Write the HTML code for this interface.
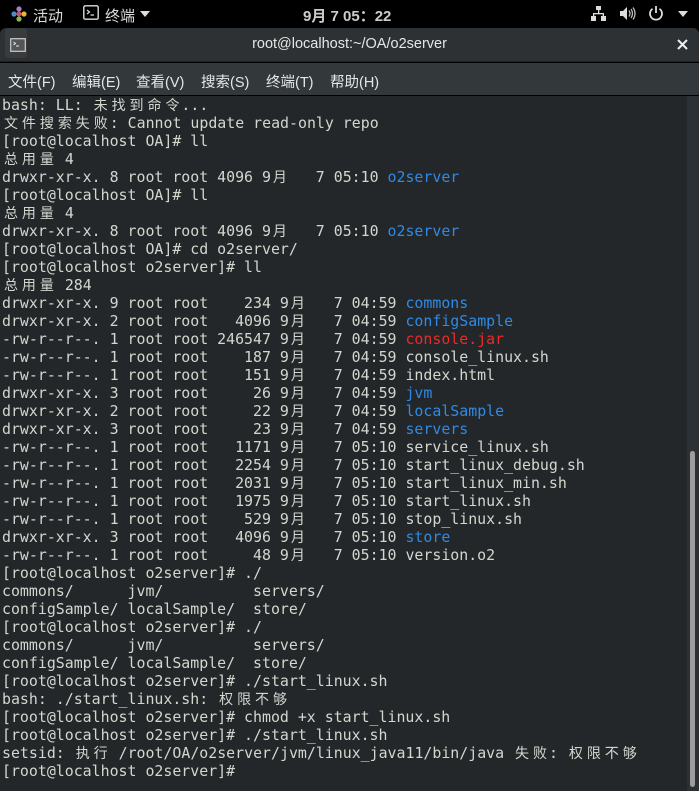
<!DOCTYPE html>
<html><head><meta charset="utf-8"><style>
*{margin:0;padding:0;box-sizing:border-box}
body{width:699px;height:791px;overflow:hidden;background:#000;font-family:"Liberation Sans","Noto Sans CJK SC",sans-serif;position:relative}
#top{position:absolute;left:0;top:0;width:699px;height:28px;background:#000;color:#dcdcdc;font-size:15px}
#top span{position:absolute;top:5px}
#title{position:absolute;left:0;top:28px;width:699px;height:34px;background:#2d3133;border-radius:6px 6px 0 0;border-bottom:1px solid #1d1f20;color:#e6e6e6;font-size:14.5px}
#menu{position:absolute;left:0;top:63px;width:699px;height:32px;background:#33393b;color:#e6e6e6;font-size:14.5px}
#menu span{position:absolute;top:8px}
#term{position:absolute;left:0;top:96px;width:687px;height:695px;background:#232729;color:#d3d7cf;font-family:"DejaVu Sans Mono","Liberation Mono","Noto Sans CJK SC",monospace;font-size:14.9px;padding-left:2px}
#term div{height:18px;line-height:18px;white-space:pre}
i{display:inline-block;width:17.96px;font-style:normal;text-align:center;font-family:"Noto Sans CJK SC",sans-serif;font-size:14px;line-height:18px;vertical-align:top}
.b{color:#2f8ae6}.r{color:#ef2929}
#sb{position:absolute;left:687px;top:96px;width:12px;height:695px;background:#2d3133}
#th{position:absolute;left:690px;top:451px;width:5px;height:336px;background:#9b9e9c;border-radius:3px}
</style></head><body>
<div id="top">
<svg style="position:absolute;left:11px;top:6px" width="16" height="16" viewBox="0 0 16 16"><circle cx="8" cy="3" r="2.6" fill="#a97fc0"/><circle cx="13" cy="8" r="2.6" fill="#e3b43a"/><circle cx="8" cy="13" r="2.6" fill="#8cb84a"/><circle cx="3" cy="8" r="2.6" fill="#4f8ec9"/><circle cx="8" cy="8" r="2.5" fill="#c94f6a"/></svg>
<span style="left:33px">活动</span>
<svg style="position:absolute;left:83px;top:5px" width="16" height="15" viewBox="0 0 16 15"><rect x="0.8" y="0.8" width="14.4" height="13.4" rx="1.5" fill="none" stroke="#ddd" stroke-width="1.4"/><path d="M4 5l2.5 2L4 9M7.5 10h3.5" stroke="#ddd" stroke-width="1.2" fill="none"/></svg>
<span style="left:105px">终端</span>
<svg style="position:absolute;left:140px;top:11px" width="10" height="6"><path d="M0 0h10L5 6z" fill="#ddd"/></svg>
<span style="left:303px;font-weight:bold;color:#ccc">9月 7 05：22</span>
<svg style="position:absolute;left:591px;top:6px" width="15" height="15" viewBox="0 0 15 15" fill="#ddd"><rect x="5" y="0" width="5" height="4"/><rect x="7" y="4" width="1.3" height="3"/><rect x="2" y="7" width="11" height="1.3"/><rect x="2" y="7" width="1.3" height="3"/><rect x="11.7" y="7" width="1.3" height="3"/><rect x="0" y="10" width="5" height="5"/><rect x="10" y="10" width="5" height="5"/></svg>
<svg style="position:absolute;left:620px;top:6px" width="16" height="15" viewBox="0 0 16 15"><path d="M0 5h3l4-4v13l-4-4H0z" fill="#ddd"/><path d="M9 4.5q2 3 0 6M11 3q3 4.5 0 9M13 1.5q4 6 0 12" stroke="#bbb" stroke-width="1.3" fill="none"/></svg>
<svg style="position:absolute;left:648px;top:5px" width="16" height="16" viewBox="0 0 16 16"><path d="M4.5 3.8a6 6 0 1 0 7 0" stroke="#ddd" stroke-width="1.8" fill="none"/><path d="M8 1v7" stroke="#ddd" stroke-width="1.8"/></svg>
<svg style="position:absolute;left:678px;top:11px" width="10" height="6"><path d="M0 0h10L5 6z" fill="#ddd"/></svg>
</div>
<div id="title">
<div style="position:absolute;left:5px;top:0;width:22px;height:30px;background:#383c3e;border-radius:3px"></div>
<svg style="position:absolute;left:10px;top:10px" width="16" height="14" viewBox="0 0 16 14"><rect x="0.7" y="0.7" width="14.6" height="12.6" fill="#555" stroke="#ccc" stroke-width="1.2"/><path d="M3.5 4l2 1.5-2 1.5M6 8h3" stroke="#eee" stroke-width="1" fill="none"/></svg>
<div style="position:absolute;left:0;width:699px;top:8px;text-align:center">root@localhost:~/OA/o2server</div>
<svg style="position:absolute;left:677px;top:11px" width="11" height="11"><path d="M1 1l9 9M10 1l-9 9" stroke="#eee" stroke-width="2"/></svg>
</div>
<div id="menu">
<span style="left:8px">文件(F)</span><span style="left:72px">编辑(E)</span><span style="left:136px">查看(V)</span><span style="left:201px">搜索(S)</span><span style="left:266px">终端(T)</span><span style="left:330px">帮助(H)</span>
</div>
<div id="term">
<div>bash: LL: <i>未</i><i>找</i><i>到</i><i>命</i><i>令</i>...</div>
<div><i>文</i><i>件</i><i>搜</i><i>索</i><i>失</i><i>败</i>: Cannot update read-only repo</div>
<div>[root@localhost OA]# ll</div>
<div><i>总</i><i>用</i><i>量</i> 4</div>
<div>drwxr-xr-x. 8 root root 4096 9<i>月</i>   7 05:10 <span class="b">o2server</span></div>
<div>[root@localhost OA]# ll</div>
<div><i>总</i><i>用</i><i>量</i> 4</div>
<div>drwxr-xr-x. 8 root root 4096 9<i>月</i>   7 05:10 <span class="b">o2server</span></div>
<div>[root@localhost OA]# cd o2server/</div>
<div>[root@localhost o2server]# ll</div>
<div><i>总</i><i>用</i><i>量</i> 284</div>
<div>drwxr-xr-x. 9 root root    234 9<i>月</i>   7 04:59 <span class="b">commons</span></div>
<div>drwxr-xr-x. 2 root root   4096 9<i>月</i>   7 04:59 <span class="b">configSample</span></div>
<div>-rw-r--r--. 1 root root 246547 9<i>月</i>   7 04:59 <span class="r">console.jar</span></div>
<div>-rw-r--r--. 1 root root    187 9<i>月</i>   7 04:59 console_linux.sh</div>
<div>-rw-r--r--. 1 root root    151 9<i>月</i>   7 04:59 index.html</div>
<div>drwxr-xr-x. 3 root root     26 9<i>月</i>   7 04:59 <span class="b">jvm</span></div>
<div>drwxr-xr-x. 2 root root     22 9<i>月</i>   7 04:59 <span class="b">localSample</span></div>
<div>drwxr-xr-x. 3 root root     23 9<i>月</i>   7 04:59 <span class="b">servers</span></div>
<div>-rw-r--r--. 1 root root   1171 9<i>月</i>   7 05:10 service_linux.sh</div>
<div>-rw-r--r--. 1 root root   2254 9<i>月</i>   7 05:10 start_linux_debug.sh</div>
<div>-rw-r--r--. 1 root root   2031 9<i>月</i>   7 05:10 start_linux_min.sh</div>
<div>-rw-r--r--. 1 root root   1975 9<i>月</i>   7 05:10 start_linux.sh</div>
<div>-rw-r--r--. 1 root root    529 9<i>月</i>   7 05:10 stop_linux.sh</div>
<div>drwxr-xr-x. 3 root root   4096 9<i>月</i>   7 05:10 <span class="b">store</span></div>
<div>-rw-r--r--. 1 root root     48 9<i>月</i>   7 05:10 version.o2</div>
<div>[root@localhost o2server]# ./</div>
<div>commons/      jvm/          servers/</div>
<div>configSample/ localSample/  store/</div>
<div>[root@localhost o2server]# ./</div>
<div>commons/      jvm/          servers/</div>
<div>configSample/ localSample/  store/</div>
<div>[root@localhost o2server]# ./start_linux.sh</div>
<div>bash: ./start_linux.sh: <i>权</i><i>限</i><i>不</i><i>够</i></div>
<div>[root@localhost o2server]# chmod +x start_linux.sh</div>
<div>[root@localhost o2server]# ./start_linux.sh</div>
<div>setsid: <i>执</i><i>行</i> /root/OA/o2server/jvm/linux_java11/bin/java <i>失</i><i>败</i>: <i>权</i><i>限</i><i>不</i><i>够</i></div>
<div>[root@localhost o2server]# </div>
</div>
<div id="sb"></div><div id="th"></div>
</body></html>
